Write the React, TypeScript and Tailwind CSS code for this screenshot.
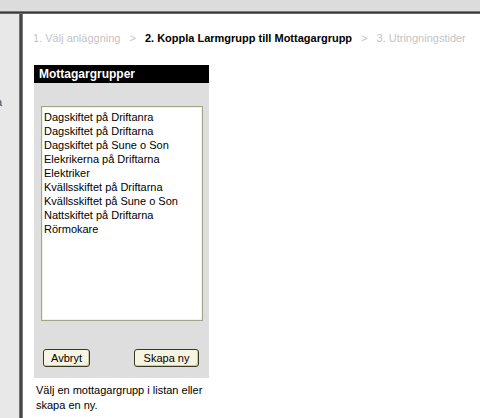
import React from "react"

const GROUPS = [
  "Dagskiftet på Driftanra",
  "Dagskiftet på Driftarna",
  "Dagskiftet på Sune o Son",
  "Elekrikerna på Driftarna",
  "Elektriker",
  "Kvällsskiftet på Driftarna",
  "Kvällsskiftet på Sune o Son",
  "Nattskiftet på Driftarna",
  "Rörmokare",
]

const Breadcrumb = () => {
  return (
    <div className="flex items-center h-[14px] text-[11px] leading-[14px] whitespace-nowrap">
      <span className="text-[#c4c4c4]">1. Välj anläggning</span>
      <span className="text-[#c4c4c4] px-[9px]">&gt;</span>
      <span className="font-bold text-black">2. Koppla Larmgrupp till Mottagargrupp</span>
      <span className="text-[#c4c4c4] px-[9px]">&gt;</span>
      <span className="text-[#c4c4c4]">3. Utringningstider</span>
    </div>
  )
}

const Button = ({ label, className }: { label: string; className?: string }) => {
  return (
    <button
      className={
        "h-[18px] rounded-[3px] border border-[#3a3a22] bg-[#f6f4e2] text-[11px] leading-[16px] text-black shadow-[inset_-1px_-1px_0_#c8c6a8] " +
        (className ?? "")
      }
    >
      {label}
    </button>
  )
}

const Panel = () => {
  return (
    <div className="w-[175px] flex flex-col">
      <div className="h-[18px] bg-black text-white font-bold text-[12px] leading-[18px] pl-[5px]">
        Mottagargrupper
      </div>
      <div className="bg-[#dedede] h-[295px] flex flex-col pl-[7px] pr-[6px] pt-[23px]">
        <div className="h-[215px] border border-[#a4a48a] bg-white">
          <div className="h-full border border-[#f2f2ea] pl-[1px] pt-[2px] flex flex-col">
            {GROUPS.map((group, index) => (
              <div key={index} className="text-[11px] leading-[14px] text-black whitespace-nowrap">
                {group}
              </div>
            ))}
          </div>
        </div>
        <div className="flex justify-between mt-[28px] pl-[2px] pr-[4px]">
          <Button label="Avbryt" className="w-[47px]" />
          <Button label="Skapa ny" className="w-[65px]" />
        </div>
      </div>
      <p className="text-[11px] leading-[15px] text-black pl-[2px] pt-[5px]">
        Välj en mottagargrupp i listan eller
        <br />
        skapa en ny.
      </p>
    </div>
  )
}

export default function App() {
  return (
    <div className="w-[480px] h-[418px] overflow-hidden flex flex-col bg-[#e6e6e6] font-['Liberation_Sans',Arial,sans-serif]">
      <div className="h-[11px] bg-[#dcdcdc]" />
      <div className="h-[3px] bg-linear-to-b from-[#9c9c9c] via-[#3a3a3a] to-[#808080]" />
      <div className="flex flex-1">
        <div className="w-[19px] bg-[#e8e8e8] pt-[81px] overflow-hidden">
          <span className="block -ml-[4px] text-[11px] leading-[14px] text-[#444]">a</span>
        </div>
        <div className="w-[4px] bg-linear-to-r from-[#8c8c8c] via-[#2e2e2e] to-[#9a9a9a]" />
        <div className="flex-1 bg-white pl-[10px] pt-[17px]">
          <Breadcrumb />
          <div className="mt-[20px] pl-[1px]">
            <Panel />
          </div>
        </div>
      </div>
    </div>
  )
}
